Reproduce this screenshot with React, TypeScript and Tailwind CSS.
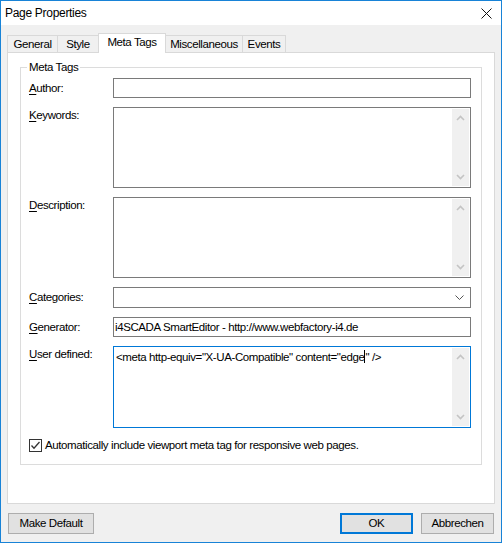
import React from 'react';

// Chevron-Pfeile für die (deaktivierten) Scrollleisten
const ScrollBar = () => (
  <div className="w-[17px] my-px mr-px bg-[#f0f0f0] flex flex-col justify-between items-center py-[6px]">
    <svg width="9" height="6" viewBox="0 0 9 6">
      <path d="M1 5 L4.5 1.5 L8 5" fill="none" stroke="#c4c4c4" strokeWidth="1.6" />
    </svg>
    <svg width="9" height="6" viewBox="0 0 9 6">
      <path d="M1 1 L4.5 4.5 L8 1" fill="none" stroke="#c4c4c4" strokeWidth="1.6" />
    </svg>
  </div>
);

const Label = ({ accel, rest, top }: { accel: string; rest: string; top?: boolean }) => (
  <div className={`w-[84px] shrink-0 ${top ? 'pt-[1px]' : 'flex items-center'}`}>
    <span>
      <span className="underline underline-offset-2">{accel}</span>
      {rest}
    </span>
  </div>
);

const tabs = [
  { name: 'General', w: 'w-[51px]' },
  { name: 'Style', w: 'w-[42px]' },
  { name: 'Meta Tags', w: 'w-[68px]', active: true },
  { name: 'Miscellaneous', w: 'w-[78px]' },
  { name: 'Events', w: 'w-[44px]' },
];

export default function App() {
  return (
    <div className="w-[502px] h-[543px] border border-[#1883d7] bg-[#f0f0f0] flex flex-col font-['Liberation_Sans',Arial,sans-serif] text-[11.5px] tracking-[-0.4px] text-black leading-[15px]">
      {/* Titelleiste */}
      <div className="h-[24px] bg-white flex items-center justify-between pl-[4px] pr-[9px]">
        <span className="text-[12px] tracking-[-0.3px]">Page Properties</span>
        <svg width="11" height="11" viewBox="0 0 11 11">
          <path d="M0.5 0.5 L10.5 10.5 M10.5 0.5 L0.5 10.5" stroke="#111" strokeWidth="1" />
        </svg>
      </div>

      <div className="flex-1 flex flex-col px-[6px]">
        {/* Reiter */}
        <div className="flex items-end mt-[8px] h-[19px]">
          {tabs.map((t, i) => (
            <div
              key={t.name}
              className={`${t.w} ${i > 0 ? '-ml-px' : ''} flex items-center justify-center border border-b-0 ${
                t.active
                  ? 'h-[20px] bg-white border-[#d9d9d9] relative z-10 -mb-px pb-[2px]'
                  : 'h-[17px] bg-[#f0f0f0] border-[#d9d9d9]'
              }`}
            >
              {t.name}
            </div>
          ))}
        </div>

        {/* Tab-Inhalt */}
        <div className="h-[452px] border border-[#d9d9d9] bg-white pt-[14px] px-[12px]">
          <div className="relative border border-[#dcdcdc] h-[398px] pt-[10px] pl-[8px] pr-[10px] flex flex-col gap-[9px]">
            <span className="absolute -top-[8px] left-[6px] bg-white px-[2px]">Meta Tags</span>

            <div className="flex h-[20px]">
              <Label accel="A" rest="uthor:" />
              <div className="flex-1 border border-[#7a7a7a] bg-white" />
            </div>

            <div className="flex h-[81px]">
              <Label accel="K" rest="eywords:" top />
              <div className="flex-1 border border-[#7a7a7a] bg-white flex">
                <div className="flex-1" />
                <ScrollBar />
              </div>
            </div>

            <div className="flex h-[81px]">
              <Label accel="D" rest="escription:" top />
              <div className="flex-1 border border-[#7a7a7a] bg-white flex">
                <div className="flex-1" />
                <ScrollBar />
              </div>
            </div>

            <div className="flex h-[21px]">
              <Label accel="C" rest="ategories:" />
              <div className="flex-1 border border-[#7a7a7a] bg-white flex items-center justify-end pr-[6px]">
                <svg width="9" height="5" viewBox="0 0 9 5">
                  <path d="M0.5 0.5 L4.5 4.5 L8.5 0.5" fill="none" stroke="#555" strokeWidth="1" />
                </svg>
              </div>
            </div>

            <div className="flex h-[20px]">
              <Label accel="G" rest="enerator:" />
              <div className="flex-1 border border-[#7a7a7a] bg-white flex items-center pl-[1px]">
                i4SCADA SmartEditor - http://www.webfactory-i4.de
              </div>
            </div>

            <div className="flex h-[82px]">
              <Label accel="U" rest="ser defined:" top />
              <div className="flex-1 border border-[#0078d7] bg-white flex">
                <div className="flex-1 pl-[2px] pt-[3px]">
                  &lt;meta http-equiv="X-UA-Compatible" content="edge
                  <span className="inline-block w-px h-[13px] bg-black align-[-2px]" />
                  " /&gt;
                </div>
                <ScrollBar />
              </div>
            </div>

            <div className="flex items-center gap-[3px] mt-[1px]">
              <div className="w-[13px] h-[13px] border border-[#333] bg-white flex items-center justify-center">
                <svg width="11" height="11" viewBox="0 0 11 11">
                  <path d="M1.5 5.5 L4 8.2 L9.5 2" fill="none" stroke="#333" strokeWidth="1.3" />
                </svg>
              </div>
              <span>Automatically include viewport meta tag for responsive web pages.</span>
            </div>
          </div>
        </div>

        {/* Schaltflächen */}
        <div className="flex items-center mt-[9px] pl-[1px] pr-[1px]">
          <button className="w-[86px] h-[21px] bg-[#e1e1e1] border border-[#adadad]">Make Default</button>
          <div className="flex-1" />
          <button className="w-[73px] h-[21px] bg-[#e1e1e1] border-2 border-[#0078d7]">OK</button>
          <button className="w-[73px] h-[21px] bg-[#e1e1e1] border border-[#adadad] ml-[8px]">Abbrechen</button>
        </div>
      </div>
    </div>
  );
}
